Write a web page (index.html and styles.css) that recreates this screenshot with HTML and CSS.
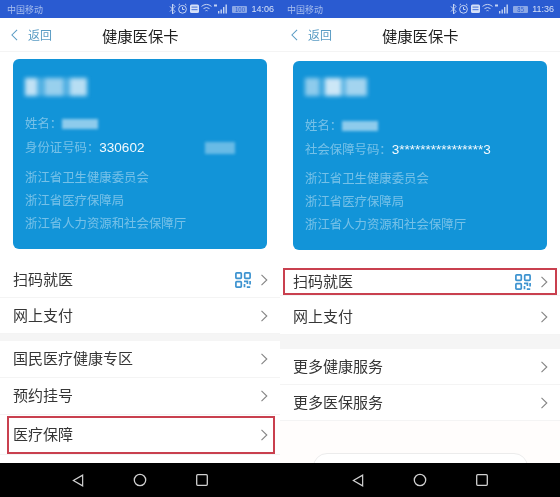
FILE: index.html
```html
<!DOCTYPE html>
<html lang="zh">
<head>
<meta charset="utf-8">
<title>健康医保卡</title>
<link rel="stylesheet" href="styles.css">
</head>
<body>
<svg class="defs" width="0" height="0" aria-hidden="true">
  <defs>
    <symbol id="chev" viewBox="0 0 8 12"><path d="M1.500 .8 6.800 6 1.500 11.200" fill="none" stroke="#858585" stroke-width="1.1"/></symbol>
    <symbol id="back" viewBox="0 0 8 14"><path d="M7 1 1 7l6 6" fill="none" stroke="#5a9cc4" stroke-width="1.2"/></symbol>
    <symbol id="qr" viewBox="0 0 16 16"><g fill="none" stroke="#3d93d0" stroke-width="1.7"><rect x=".9" y=".9" width="5.400" height="5.400" rx=".8"/><rect x="9.700" y=".9" width="5.400" height="5.400" rx=".8"/><rect x=".9" y="9.700" width="5.400" height="5.400" rx=".8"/><path d="M9 9.400h3.400V12M15.100 9v3.600M9.500 12v3.200M11.800 15.100h3.400"/></g></symbol>
    <symbol id="status" viewBox="0 0 58 12">
      <g fill="none" stroke="#c5d4f3" stroke-width="1">
        <path d="M1 3.500 6 8.500 3.500 11V1L6 3.500 1 8.500"/>
        <circle cx="13.500" cy="6.300" r="3.900"/><path d="M13.500 4v2.500h2M9.600 2 11 .9M17.400 2 16 .9"/>
        <path d="M32.500 3.400a8 8 0 0 1 10 0M34.500 5.600a5 5 0 0 1 6 0M36.500 7.800a2 2 0 0 1 2 0"/>
      </g>
      <rect x="21" y="1.500" width="9" height="8.500" rx="1.500" fill="#d5e0f7"/>
      <rect x="22.500" y="3.500" width="6" height="1.200" fill="#5d83de"/><rect x="22.500" y="6" width="6" height="1.200" fill="#5d83de"/>
      <path d="M45 1.500h3v2h-3zM49 8h1.400v2.500H49zM51.500 6.500h1.400v4h-1.400zM54 4h1.400v6.500H54zM56.500 1.500h1.400v9h-1.400z" fill="#c5d4f3"/>
    </symbol>
    <symbol id="nav-back" viewBox="0 0 12 14"><path d="M11 1.200V12.800L1 7Z" fill="none" stroke="#d0d0d0" stroke-width="1.300"/></symbol>
    <symbol id="nav-home" viewBox="0 0 14 14"><circle cx="7" cy="7" r="5.700" fill="none" stroke="#d0d0d0" stroke-width="1.300"/></symbol>
    <symbol id="nav-rec" viewBox="0 0 12 12"><rect x=".7" y=".7" width="10.600" height="10.600" rx="1" fill="none" stroke="#d0d0d0" stroke-width="1.300"/></symbol>
  </defs>
</svg>
<main class="screens">
  <section class="phone phone-left">
    <div class="status"><span>中国移动</span><span class="status-right"><svg class="status-icons"><use href="#status"/></svg><span class="battery">100</span><span class="clock">14:06</span></span></div>
    <header class="topbar"><span class="back"><svg class="back-icon"><use href="#back"/></svg>返回</span><h1>健康医保卡</h1></header>
    <div class="card">
      <div class="mask mask-title"></div>
      <p class="field field-name">姓名：<span class="mask mask-name"></span></p>
      <p class="field field-id">身份证号码：<span class="num">330602</span><span class="mask mask-id"></span></p>
      <ul class="orgs"><li>浙江省卫生健康委员会</li><li>浙江省医疗保障局</li><li>浙江省人力资源和社会保障厅</li></ul>
    </div>
    <div class="group">
      <div class="row"><span>扫码就医</span><svg class="qr"><use href="#qr"/></svg><svg class="chev"><use href="#chev"/></svg></div>
      <div class="row"><span>网上支付</span><svg class="chev"><use href="#chev"/></svg></div>
    </div>
    <div class="group group-second">
      <div class="row"><span>国民医疗健康专区</span><svg class="chev"><use href="#chev"/></svg></div>
      <div class="row"><span>预约挂号</span><svg class="chev"><use href="#chev"/></svg></div>
      <div class="row row-mark"><span>医疗保障</span><svg class="chev"><use href="#chev"/></svg></div>
    </div>
    <nav class="navbar"><svg class="nav-a"><use href="#nav-back"/></svg><svg class="nav-b"><use href="#nav-home"/></svg><svg class="nav-c"><use href="#nav-rec"/></svg></nav>
  </section>
  <section class="phone phone-right">
    <div class="status"><span>中国移动</span><span class="status-right"><svg class="status-icons"><use href="#status"/></svg><span class="battery">85</span><span class="clock">11:36</span></span></div>
    <header class="topbar"><span class="back"><svg class="back-icon"><use href="#back"/></svg>返回</span><h1>健康医保卡</h1></header>
    <div class="card">
      <div class="mask mask-title"></div>
      <p class="field field-name">姓名：<span class="mask mask-name"></span></p>
      <p class="field field-id">社会保障号码：<span class="num">3****************3</span></p>
      <ul class="orgs"><li>浙江省卫生健康委员会</li><li>浙江省医疗保障局</li><li>浙江省人力资源和社会保障厅</li></ul>
    </div>
    <div class="group">
      <div class="row row-mark"><span>扫码就医</span><svg class="qr"><use href="#qr"/></svg><svg class="chev"><use href="#chev"/></svg></div>
      <div class="row row-short"><span>网上支付</span><svg class="chev"><use href="#chev"/></svg></div>
    </div>
    <div class="group group-second">
      <div class="row"><span>更多健康服务</span><svg class="chev"><use href="#chev"/></svg></div>
      <div class="row"><span>更多医保服务</span><svg class="chev"><use href="#chev"/></svg></div>
    </div>
    <div class="peek"><div class="peek-box"></div></div>
    <nav class="navbar"><svg class="nav-a"><use href="#nav-back"/></svg><svg class="nav-b"><use href="#nav-home"/></svg><svg class="nav-c"><use href="#nav-rec"/></svg></nav>
  </section>
</main>
</body>
</html>
```
FILE: styles.css
```css
* { box-sizing: border-box; }
html, body { margin: 0; padding: 0; }
body { width: 560px; height: 497px; overflow: hidden; background: #fff; font-family: "Noto Sans CJK SC", "Liberation Sans", sans-serif; }
.defs { display: block; height: 0; }
.screens { display: flex; width: 560px; height: 497px; filter: blur(.35px); }
.phone { width: 280px; height: 497px; display: flex; flex-direction: column; background: #fff; }
.status { height: 18px; flex: none; display: flex; justify-content: space-between; align-items: center; padding: 0 6px 0 7px; background: #2a5bd1; color: #a9bfee; font-size: 9px; line-height: 1; }
.status-right { display: flex; align-items: center; }
.status-icons { width: 58px; height: 12px; margin-right: 5px; }
.battery { width: 15px; height: 7px; border-radius: 1px; background: #8ba7e6; color: #2a5bd1; font-size: 6px; line-height: 7px; text-align: center; margin-right: 4px; }
.clock { font-family: "Liberation Sans", sans-serif; font-size: 9px; color: #d5e0f7; }
.topbar { height: 34px; flex: none; display: flex; align-items: center; border-bottom: 1px solid #f4f4f4; padding-left: 11px; }
.back { width: 91px; display: flex; align-items: center; gap: 10px; color: #5a9cc4; font-size: 12px; }
.back-icon { width: 7px; height: 12px; }
h1 { margin: 0; font-size: 15.3px; line-height: 20px; font-weight: 400; color: #1f1f1f; }
.card { margin: 7px 13px 0; background: #1294d8; border-radius: 6px; padding-left: 12px; color: rgba(255,255,255,.42); font-size: 12.4px; flex: none; }
.phone-left .card { height: 190px; padding-top: 19px; }
.phone-right .card { height: 189px; margin-top: 9px; padding-top: 17px; }
.mask { background: rgba(225,240,250,.75); }
.mask-title { width: 62px; height: 18px; background: linear-gradient(90deg, rgba(225,240,250,.85) 0 20%, rgba(225,240,250,.3) 20% 32%, rgba(225,240,250,.65) 32% 62%, rgba(225,240,250,.3) 62% 72%, rgba(225,240,250,.8) 72%); filter: blur(2px); }
.phone-right .mask-title { background: linear-gradient(90deg, rgba(225,240,250,.6) 0 22%, rgba(225,240,250,.2) 22% 32%, rgba(225,240,250,.9) 32% 58%, rgba(225,240,250,.35) 58% 66%, rgba(225,240,250,.7) 66%); }
.mask-name { display: inline-block; width: 36px; height: 10px; vertical-align: -1px; background: rgba(225,240,250,.6); filter: blur(1.5px); }
.mask-id { display: inline-block; width: 30px; height: 12px; margin-left: 61px; vertical-align: -2px; background: rgba(225,240,250,.42); filter: blur(1.5px); }
.field { margin: 0; line-height: 18px; white-space: nowrap; }
.phone-left .field-name { margin-top: 18px; }
.phone-right .field-name { margin-top: 20px; }
.field-id { margin-top: 6px; }
.num { font-family: "Liberation Sans", sans-serif; font-size: 13.5px; color: #f2f9fd; }
.orgs { list-style: none; margin: 9px 0 0; padding: 0; line-height: 23px; }
.phone-right .orgs { margin-top: 8px; }
.group { flex: none; margin-top: 13px; }
.phone-right .group { margin-top: 18px; }
.phone-left .group-second { margin-top: 0; border-top: 7px solid #f5f5f5; }
.phone-right .group-second { margin-top: 0; border-top: 14px solid #f5f5f5; }
.row { position: relative; height: 36px; display: flex; align-items: center; padding: 0 12px 0 13px; border-bottom: 1px solid #f4f4f4; font-size: 15px; line-height: 18px; color: #363636; }
.row > span { flex: 1; padding-bottom: 2px; }
.phone-left .group-second .row { height: 37px; }
.phone-left .group-second .row-mark { height: 39px; margin-top: 1px; }
.phone-right .row-mark { height: 28px; margin-bottom: 4px; }
.phone-right .row-short { height: 35px; }
.row-mark::after { content: ""; position: absolute; top: 0; bottom: 0; border: 2px solid #c9404f; pointer-events: none; }
.phone-left .row-mark::after { left: 7px; right: 5px; }
.phone-right .row-mark::after { left: 3px; right: 3px; }
.qr { width: 16px; height: 16px; margin-right: 9px; }
.chev { width: 8px; height: 12px; flex: none; }
.peek { flex: 1; min-height: 0; overflow: hidden; padding: 32px 32px 0 33px; background: #fffdfc; }
.peek-box { height: 40px; border: 1px solid #ececec; border-radius: 14px; background: #fff; }
.navbar { margin-top: auto; height: 34px; flex: none; display: flex; align-items: center; padding-left: 72px; background: #000; }
.nav-a { width: 12px; height: 13px; }
.nav-b { width: 14px; height: 14px; margin-left: 49px; }
.nav-c { width: 12px; height: 12px; margin-left: 49px; }
```
